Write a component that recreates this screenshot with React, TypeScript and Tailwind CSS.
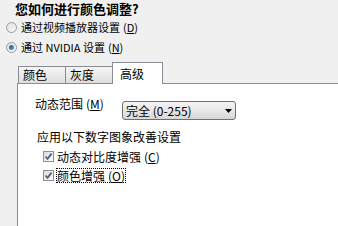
import type { ReactNode } from "react";

const font = { fontFamily: '"Noto Sans CJK SC", "Noto Sans", sans-serif' };

function Key({ k }: { k: string }) {
  // access-key letter, shown as "(D)" with the letter underlined
  return (
    <span className="ml-[3px]">
      (<span className="underline underline-offset-1">{k}</span>)
    </span>
  );
}

function Radio({ checked, children }: { checked?: boolean; children: ReactNode }) {
  return (
    <div className="flex h-[14px] items-center pl-[6px]">
      <span className="flex h-[11px] w-[11px] items-center justify-center rounded-full border border-[#9a9a9a] bg-linear-to-br from-[#e0e0e0] to-[#fafafa]">
        {checked && (
          <span className="h-[5px] w-[5px] rounded-full bg-linear-to-br from-[#1b4f91] to-[#62a3e0]" />
        )}
      </span>
      <span className="ml-[4px] text-[11px] leading-[14px] text-black">{children}</span>
    </div>
  );
}

function Check({ children, focused }: { children: ReactNode; focused?: boolean }) {
  return (
    <div className="flex h-[13px] items-center pl-[8px]">
      <span className="flex h-[11px] w-[11px] items-center justify-center border border-[#8f8f8f] bg-linear-to-br from-[#dcdcdc] to-[#fbfbfb]">
        <svg width="9" height="9" viewBox="0 0 9 9">
          <path d="M1.5 4.5 L3.5 6.8 L7.6 1.6" fill="none" stroke="#4d6185" strokeWidth="1.7" />
        </svg>
      </span>
      <span
        className={
          "ml-[3px] text-[12px] leading-[13px] text-black " +
          (focused ? "outline outline-1 outline-dotted outline-black" : "")
        }
      >
        {children}
      </span>
    </div>
  );
}

function Tab({ label, active }: { label: string; active?: boolean }) {
  if (active) {
    return (
      <div className="relative z-10 -mb-px flex h-[22px] w-[51px] items-center border-x border-t border-[#898c95] bg-white pl-[7px] text-[12px] text-black">
        {label}
      </div>
    );
  }
  return (
    <div className="flex h-[17px] w-[47px] items-center border-l border-t border-[#898c95] bg-linear-to-b from-[#f5f5f5] to-[#dedede] pl-[4px] text-[12px] text-black">
      {label}
    </div>
  );
}

export default function App() {
  return (
    <div className="flex h-[226px] w-[338px] flex-col overflow-hidden bg-[#f0f0f0]" style={font}>
      <div className="h-[18px] pl-[15px] pt-px text-[13px] font-bold leading-[16px] text-black">
        您如何进行颜色调整?
      </div>

      <div className="mt-[2px]">
        <Radio>
          通过视频播放器设置
          <Key k="D" />
        </Radio>
      </div>
      <div className="mt-[6px]">
        <Radio checked>
          通过 NVIDIA 设置
          <Key k="N" />
        </Radio>
      </div>

      <div className="mt-[8px] flex h-[21px] items-end pl-[18px]">
        <Tab label="颜色" />
        <Tab label="灰度" />
        <Tab label="高级" active />
      </div>

      <div className="ml-[17px] flex-1 border-l border-t border-[#898c95] bg-white pl-[17px] pt-[13px]">
        <div className="flex items-start">
          <div className="h-[14px] w-[87px] text-[12px] leading-[14px] text-black">
            动态范围
            <Key k="M" />
          </div>
          <div className="mt-[4px] flex h-[19px] w-[114px] items-center justify-between rounded-[3px] border border-[#707070] bg-linear-to-b from-[#f3f3f3] via-[#e8e8e8] to-[#d6d6d6] pl-[3px] pr-[3px]">
            <span className="text-[12px] leading-[14px] text-black">完全 (0-255)</span>
            <svg width="7" height="4" viewBox="0 0 7 4">
              <path d="M0 0 H7 L3.5 4 Z" fill="#000" />
            </svg>
          </div>
        </div>

        <div className="mt-[10px] h-[14px] pl-[2px] text-[12px] leading-[14px] text-black">
          应用以下数字图象改善设置
        </div>

        <div className="mt-[6px]">
          <Check>
            动态对比度增强
            <Key k="C" />
          </Check>
        </div>
        <div className="mt-[6px]">
          <Check focused>
            颜色增强
            <Key k="O" />
          </Check>
        </div>
      </div>
    </div>
  );
}
